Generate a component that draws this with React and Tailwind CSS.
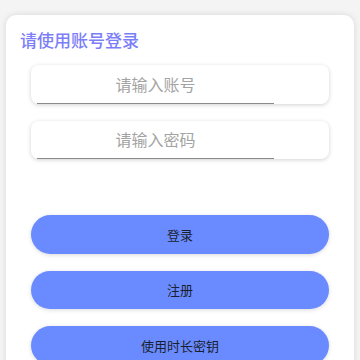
import React from "react";

export default function App() {
  const font = { fontFamily: '"Noto Sans CJK SC", "Noto Sans", sans-serif' };
  return (
    <div className="w-[360px] h-[360px] overflow-hidden bg-[#f4f4f4]" style={font}>
      <div className="mx-[6px] mt-[15px] h-[400px] rounded-[10px] bg-white shadow-[0_0_6px_rgba(0,0,0,0.12)] pt-[13px]">
        <div className="pl-[14px] text-[17px] leading-[24px] font-medium text-[#7b7ef7]">请使用账号登录</div>
        <div className="mx-[25px] mt-[13px] flex flex-col gap-[17px]">
          {["请输入账号", "请输入密码"].map((p) => (
            <div key={p} className="h-[38.5px] rounded-[8px] bg-white shadow-[0_1px_4px_rgba(0,0,0,0.18)] pl-[6px] flex">
              <input
                placeholder={p}
                className="w-[237px] h-full bg-transparent border-b border-[#8a8a8a] text-center text-[16px] outline-none placeholder:text-[#a3a3a3]"
                style={font}
              />
            </div>
          ))}
        </div>
        <div className="mx-[25px] mt-[56px] flex flex-col gap-[17px]">
          {["登录", "注册", "使用时长密钥"].map((t) => (
            <button
              key={t}
              className="h-[38.5px] rounded-full bg-[#6a8bff] text-[13px] text-[#1a1f2e] shadow-[0_1px_4px_rgba(0,0,0,0.15)]"
              style={font}
            >
              {t}
            </button>
          ))}
        </div>
      </div>
    </div>
  );
}
